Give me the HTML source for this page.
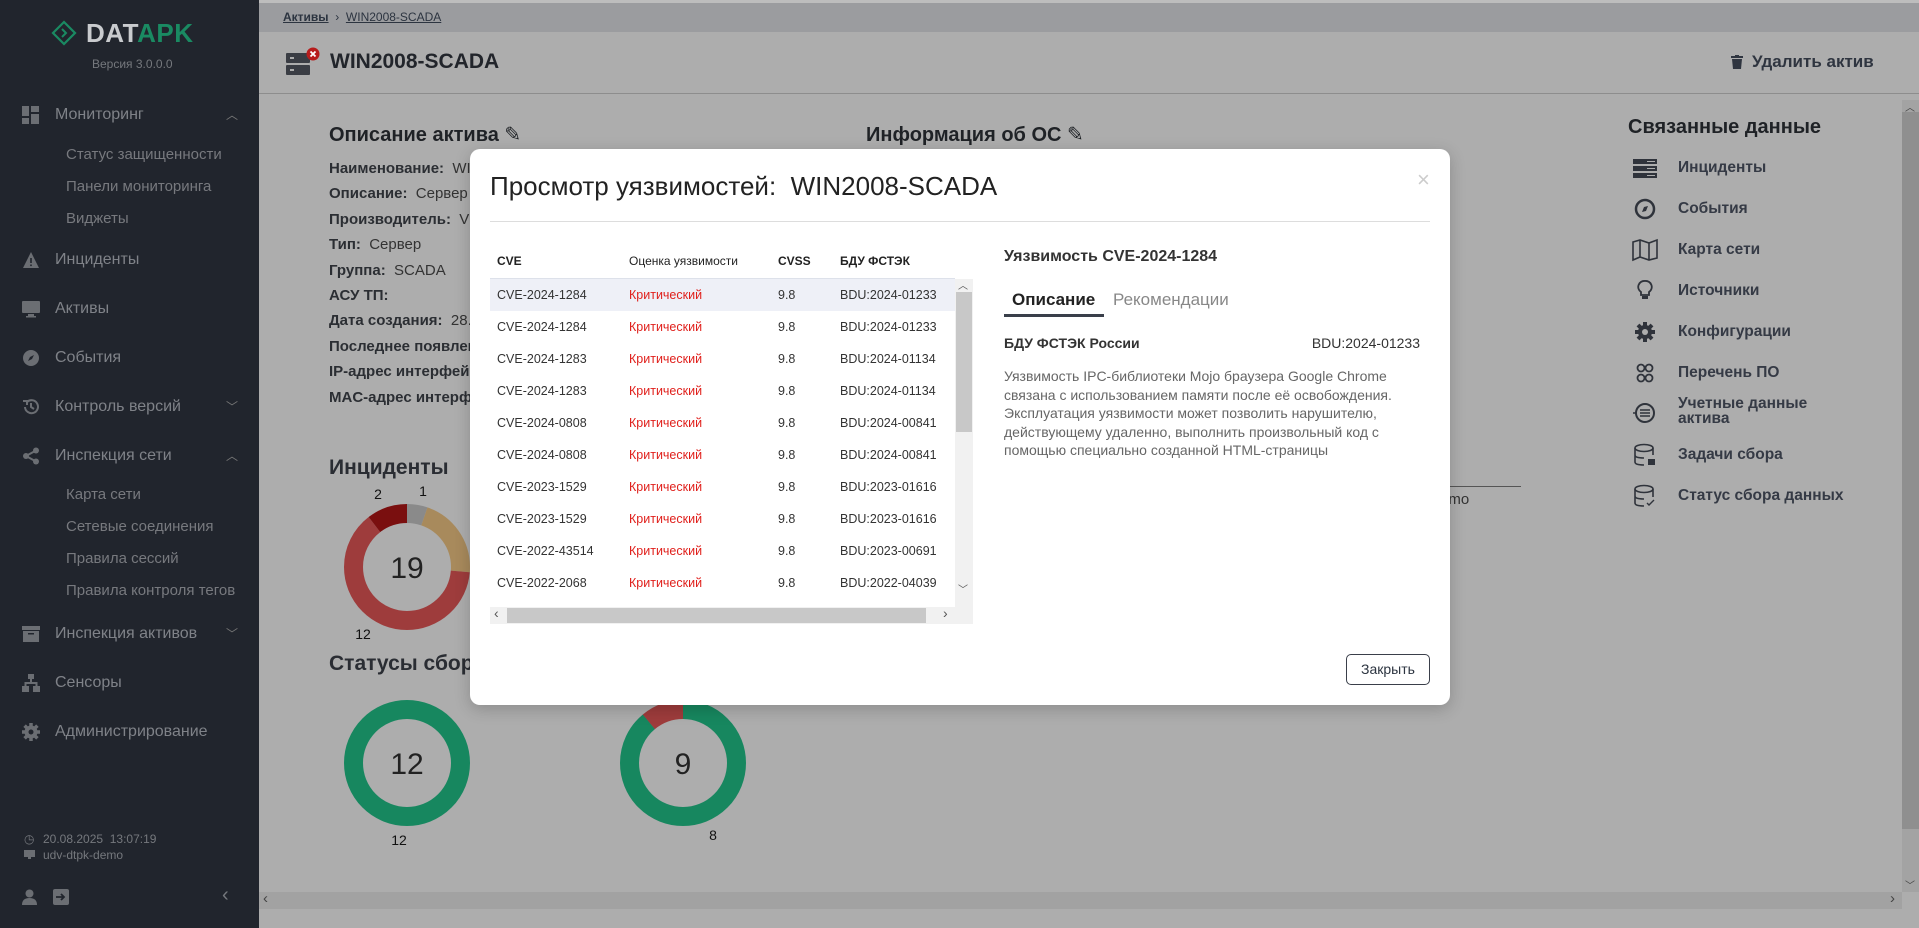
<!DOCTYPE html>
<html><head><meta charset="utf-8">
<style>
*{margin:0;padding:0;box-sizing:border-box}
body{width:1919px;height:928px;overflow:hidden;background:#adadad;font-family:"Liberation Sans","DejaVu Sans",sans-serif;position:relative;color:#2a2d33}
.a{position:absolute;white-space:nowrap}
#sb{position:absolute;left:0;top:0;width:259px;height:928px;background:#21252d}
.mi{position:absolute;left:55px;font-size:16px;color:#7f8288}
.si{position:absolute;left:66px;font-size:15px;color:#77797e}
.ic{position:absolute;left:22px;width:18px;height:18px}
.chev{position:absolute;left:226px;font-size:12px;color:#777}
.lbl{font-weight:bold;color:#2b2e33}
.row{position:absolute;left:329px;font-size:15px;color:#333}
.rd{position:absolute;left:1678px;font-size:15.5px;font-weight:bold;color:#353a45}
.rdi{position:absolute;left:1632px;width:26px;height:24px}
#modal{position:absolute;left:470px;top:149px;width:980px;height:556px;background:#fff;border-radius:10px;box-shadow:0 4px 16px rgba(0,0,0,.2);overflow:hidden}
.tr{position:absolute;left:20px;width:465px;height:32px;font-size:12.5px;color:#333}
.tr span{position:absolute;top:9px}
.c1{left:7px}.c2{left:139px;color:#e0201c}.c3{left:288px}.c4{left:350px}
</style></head><body>

<div id="sb">
  <svg class="a" style="left:51px;top:20px" width="26" height="26" viewBox="0 0 26 26"><path d="M13 2 L24 13 L13 24 L2 13 Z" fill="none" stroke="#1a8a62" stroke-width="2.2"/><path d="M11 9 L15 13 L11 17" fill="none" stroke="#1a8a62" stroke-width="2"/></svg>
  <div class="a" style="left:86px;top:18px;font-size:26px;font-weight:bold;letter-spacing:.5px;color:#c9cbce">DAT<span style="color:#1a8a62">APK</span></div>
  <div class="a" style="left:92px;top:57px;font-size:12px;color:#75787d">Версия 3.0.0.0</div>

  <svg class="ic" style="top:106px" viewBox="0 0 18 18"><rect x="0" y="0" width="7" height="10" fill="#6b6e73"/><rect x="9" y="0" width="8" height="6" fill="#6b6e73"/><rect x="9" y="8" width="8" height="10" fill="#6b6e73"/><rect x="0" y="12" width="7" height="6" fill="#6b6e73"/></svg>
  <div class="mi" style="top:106px">Мониторинг</div><div class="chev" style="top:106px">︿</div>
  <div class="si" style="top:146px">Статус защищенности</div>
  <div class="si" style="top:178px">Панели мониторинга</div>
  <div class="si" style="top:210px">Виджеты</div>
  <svg class="ic" style="top:251px" viewBox="0 0 18 18"><path d="M9 1 L17 17 L1 17 Z" fill="#6b6e73"/><rect x="8.2" y="7" width="1.6" height="5" fill="#21252d"/><rect x="8.2" y="13.5" width="1.6" height="1.6" fill="#21252d"/></svg>
  <div class="mi" style="top:251px">Инциденты</div>
  <svg class="ic" style="top:300px" viewBox="0 0 18 18"><rect x="0" y="1" width="18" height="12" rx="1" fill="#6b6e73"/><rect x="6" y="14" width="6" height="2" fill="#6b6e73"/><rect x="4" y="16" width="10" height="1.5" fill="#6b6e73"/></svg>
  <div class="mi" style="top:300px">Активы</div>
  <svg class="ic" style="top:349px" viewBox="0 0 18 18"><circle cx="9" cy="9" r="8" fill="#6b6e73"/><path d="M12 6 L10 10 L6 12 L8 8 Z" fill="#21252d"/></svg>
  <div class="mi" style="top:349px">События</div>
  <svg class="ic" style="top:398px" viewBox="0 0 18 18"><path d="M3 9 A6.5 6.5 0 1 0 5 4" fill="none" stroke="#6b6e73" stroke-width="2"/><path d="M1 3 L5 3 L5 7" fill="none" stroke="#6b6e73" stroke-width="2"/><path d="M9 5 L9 9 L12 11" fill="none" stroke="#6b6e73" stroke-width="2"/></svg>
  <div class="mi" style="top:398px">Контроль версий</div><div class="chev" style="top:398px">﹀</div>
  <svg class="ic" style="top:447px" viewBox="0 0 18 18"><circle cx="4" cy="9" r="3" fill="#6b6e73"/><circle cx="14" cy="3.5" r="3" fill="#6b6e73"/><circle cx="14" cy="14.5" r="3" fill="#6b6e73"/><path d="M4 9 L14 3.5 M4 9 L14 14.5" stroke="#6b6e73" stroke-width="2"/></svg>
  <div class="mi" style="top:447px">Инспекция сети</div><div class="chev" style="top:447px">︿</div>
  <div class="si" style="top:486px">Карта сети</div>
  <div class="si" style="top:518px">Сетевые соединения</div>
  <div class="si" style="top:550px">Правила сессий</div>
  <div class="si" style="top:582px">Правила контроля тегов</div>
  <svg class="ic" style="top:625px" viewBox="0 0 18 18"><rect x="0" y="1" width="18" height="4" fill="#6b6e73"/><rect x="1" y="6" width="16" height="11" fill="#6b6e73"/><rect x="6" y="8" width="6" height="1.5" fill="#21252d"/></svg>
  <div class="mi" style="top:625px">Инспекция активов</div><div class="chev" style="top:625px">﹀</div>
  <svg class="ic" style="top:674px" viewBox="0 0 18 18"><rect x="6" y="0" width="6" height="5" fill="#6b6e73"/><rect x="0" y="12" width="7" height="6" fill="#6b6e73"/><rect x="11" y="12" width="7" height="6" fill="#6b6e73"/><path d="M9 5 V9 M3.5 12 V9 H14.5 V12" fill="none" stroke="#6b6e73" stroke-width="2"/></svg>
  <div class="mi" style="top:674px">Сенсоры</div>
  <svg class="ic" style="top:723px" viewBox="0 0 18 18"><circle cx="9" cy="9" r="6.5" fill="#6b6e73"/><path d="M9 0 V18 M0 9 H18 M2.6 2.6 L15.4 15.4 M15.4 2.6 L2.6 15.4" stroke="#6b6e73" stroke-width="3.5"/><circle cx="9" cy="9" r="2.5" fill="#21252d"/></svg>
  <div class="mi" style="top:723px">Администрирование</div>

  <div class="a" style="left:24px;top:832px;font-size:12px;color:#75787d">◷</div>
  <div class="a" style="left:43px;top:832px;font-size:12px;color:#75787d">20.08.2025 &nbsp;13:07:19</div>
  <svg class="a" style="left:24px;top:850px" width="11" height="10" viewBox="0 0 11 10"><rect x="0" y="0" width="11" height="7" fill="#6b6e73"/><rect x="4" y="7" width="3" height="2" fill="#6b6e73"/></svg>
  <div class="a" style="left:43px;top:848px;font-size:12px;color:#75787d">udv-dtpk-demo</div>
  <svg class="a" style="left:22px;top:889px" width="15" height="16" viewBox="0 0 15 16"><circle cx="7.5" cy="4.5" r="4" fill="#6b6e73"/><path d="M0 16 Q0 9 7.5 9 Q15 9 15 16 Z" fill="#6b6e73"/></svg>
  <svg class="a" style="left:53px;top:889px" width="16" height="16" viewBox="0 0 16 16"><rect x="0" y="0" width="16" height="16" rx="2" fill="#6b6e73"/><path d="M3 8 H11 M8 5 L11 8 L8 11" fill="none" stroke="#21252d" stroke-width="1.8"/></svg>
  <div class="a" style="left:222px;top:884px;font-size:20px;color:#75787d">‹</div>
</div>

<!-- top bars -->
<div class="a" style="left:259px;top:0;width:1660px;height:3px;background:#bdbdbd"></div>
<div class="a" style="left:259px;top:3px;width:1660px;height:29px;background:#9b9c9f"></div>
<div class="a" style="left:283px;top:10px;font-size:12px;color:#2c3440"><b style="text-decoration:underline">Активы</b> &nbsp;›&nbsp; <span style="text-decoration:underline">WIN2008-SCADA</span></div>
<div class="a" style="left:259px;top:93px;width:1660px;height:1px;background:#8d8d8d"></div>
<svg class="a" style="left:286px;top:47px" width="36" height="30" viewBox="0 0 36 30"><rect x="0" y="6" width="24" height="10" rx="1" fill="#3a3d44"/><rect x="0" y="18" width="24" height="10" rx="1" fill="#3a3d44"/><rect x="4" y="10" width="4" height="2" fill="#adadad"/><rect x="4" y="22" width="4" height="2" fill="#adadad"/><circle cx="27" cy="7" r="6.5" fill="#b71c1c"/><path d="M24.5 4.5 L29.5 9.5 M29.5 4.5 L24.5 9.5" stroke="#fff" stroke-width="1.8"/></svg>
<div class="a" style="left:330px;top:50px;font-size:21px;font-weight:bold;color:#22252b">WIN2008-SCADA</div>
<svg class="a" style="left:1731px;top:55px" width="12" height="14" viewBox="0 0 12 14"><rect x="0" y="1" width="12" height="2" fill="#2f3540"/><rect x="4" y="0" width="4" height="2" fill="#2f3540"/><path d="M1 4 H11 L10 14 H2 Z" fill="#2f3540"/></svg>
<div class="a" style="left:1752px;top:52px;font-size:17px;font-weight:bold;color:#2f3540">Удалить актив</div>

<!-- left column -->
<div class="a" style="left:329px;top:122px;font-size:20px;font-weight:bold;color:#1f2226">Описание актива ✎</div>
<div class="row" style="top:160px"><span class="lbl">Наименование:</span>&nbsp; WI</div>
<div class="row" style="top:185px"><span class="lbl">Описание:</span>&nbsp; Сервер S</div>
<div class="row" style="top:211px"><span class="lbl">Производитель:</span>&nbsp; VM</div>
<div class="row" style="top:236px"><span class="lbl">Тип:</span>&nbsp; Сервер</div>
<div class="row" style="top:262px"><span class="lbl">Группа:</span>&nbsp; SCADA</div>
<div class="row" style="top:287px"><span class="lbl">АСУ ТП:</span></div>
<div class="row" style="top:312px"><span class="lbl">Дата создания:</span>&nbsp; 28.0</div>
<div class="row" style="top:338px"><span class="lbl">Последнее появлен</span></div>
<div class="row" style="top:363px"><span class="lbl">IP-адрес интерфейс</span></div>
<div class="row" style="top:389px"><span class="lbl">MAC-адрес интерфе</span></div>
<div class="a" style="left:866px;top:122px;font-size:20px;font-weight:bold;color:#1f2226">Информация об ОС ✎</div>
<div class="a" style="left:329px;top:456px;font-size:21px;font-weight:bold;color:#2a2d33">Инциденты</div>
<div class="a" style="left:329px;top:652px;font-size:21px;font-weight:bold;color:#2a2d33">Статусы сбора</div>
<div class="a" style="left:1408px;top:486px;width:113px;height:1px;background:#555"></div>
<div class="a" style="left:1440px;top:491px;font-size:15px;color:#333">emo</div>

<svg class="a" style="left:300px;top:440px" width="500" height="420" viewBox="300 440 500 420">
  <g transform="rotate(-90 407 567)" fill="none" stroke-width="19">
    <circle cx="407" cy="567" r="53.5" stroke="#8a8a8a" stroke-dasharray="17.7 400" stroke-dashoffset="0"/>
    <circle cx="407" cy="567" r="53.5" stroke="#a88a5c" stroke-dasharray="70.8 400" stroke-dashoffset="-17.7"/>
    <circle cx="407" cy="567" r="53.5" stroke="#9e3c3c" stroke-dasharray="212.3 400" stroke-dashoffset="-88.5"/>
    <circle cx="407" cy="567" r="53.5" stroke="#7a0f0f" stroke-dasharray="35.4 400" stroke-dashoffset="-300.8"/>
  </g>
  <circle cx="407" cy="763" r="53.5" fill="none" stroke="#17875f" stroke-width="19"/>
  <g transform="rotate(-90 683 763)" fill="none" stroke-width="19">
    <circle cx="683" cy="763" r="53.5" stroke="#17875f" stroke-dasharray="299 400"/>
    <circle cx="683" cy="763" r="53.5" stroke="#9e3c3c" stroke-dasharray="37.4 400" stroke-dashoffset="-298.8"/>
  </g>
  <text x="407" y="578" font-size="30" text-anchor="middle" fill="#222" font-family="Liberation Sans">19</text>
  <text x="407" y="774" font-size="30" text-anchor="middle" fill="#222" font-family="Liberation Sans">12</text>
  <text x="683" y="774" font-size="30" text-anchor="middle" fill="#222" font-family="Liberation Sans">9</text>
  <text x="378" y="499" font-size="14" text-anchor="middle" fill="#111" font-family="Liberation Sans">2</text>
  <text x="423" y="496" font-size="14" text-anchor="middle" fill="#111" font-family="Liberation Sans">1</text>
  <text x="363" y="639" font-size="14" text-anchor="middle" fill="#111" font-family="Liberation Sans">12</text>
  <text x="399" y="845" font-size="14" text-anchor="middle" fill="#111" font-family="Liberation Sans">12</text>
  <text x="713" y="840" font-size="14" text-anchor="middle" fill="#111" font-family="Liberation Sans">8</text>
</svg>

<!-- right column -->
<div class="a" style="left:1628px;top:116px;font-size:20px;font-weight:bold;color:#1f2226">Связанные данные</div>
<svg class="rdi" style="top:156px" viewBox="0 0 26 24"><rect x="1" y="3" width="24" height="5" fill="#2f333b"/><rect x="1" y="10" width="24" height="5" fill="#2f333b"/><rect x="1" y="17" width="24" height="5" fill="#2f333b"/><rect x="15" y="5" width="8" height="1" fill="#adadad"/><rect x="15" y="12" width="8" height="1" fill="#adadad"/><rect x="15" y="19" width="8" height="1" fill="#adadad"/></svg>
<div class="rd" style="top:159px">Инциденты</div>
<svg class="rdi" style="top:197px" viewBox="0 0 26 24"><circle cx="13" cy="12" r="9" fill="none" stroke="#2f333b" stroke-width="2.5"/><path d="M16 9 L14 14 L10 15 L12 10 Z" fill="#2f333b"/></svg>
<div class="rd" style="top:200px">События</div>
<svg class="rdi" style="top:238px" viewBox="0 0 26 24"><path d="M1 4 L8 2 L17 5 L25 2 V20 L17 22 L8 19 L1 22 Z M8 2 V19 M17 5 V22" fill="none" stroke="#2f333b" stroke-width="1.6"/></svg>
<div class="rd" style="top:241px">Карта сети</div>
<svg class="rdi" style="top:279px" viewBox="0 0 26 24"><path d="M13 2 A6 6 0 0 0 9 13 V16 H17 V13 A6 6 0 0 0 13 2 Z" fill="none" stroke="#2f333b" stroke-width="1.8"/><rect x="10" y="17" width="6" height="3" fill="#2f333b"/></svg>
<div class="rd" style="top:282px">Источники</div>
<svg class="rdi" style="top:320px" viewBox="0 0 26 24"><circle cx="13" cy="12" r="7" fill="#2f333b"/><path d="M13 2 V22 M3 12 H23 M6 5 L20 19 M20 5 L6 19" stroke="#2f333b" stroke-width="4"/><circle cx="13" cy="12" r="3" fill="#adadad"/></svg>
<div class="rd" style="top:323px">Конфигурации</div>
<svg class="rdi" style="top:361px" viewBox="0 0 26 24"><circle cx="9" cy="7" r="3.5" fill="none" stroke="#2f333b" stroke-width="1.8"/><circle cx="17" cy="7" r="3.5" fill="none" stroke="#2f333b" stroke-width="1.8"/><circle cx="9" cy="17" r="3.5" fill="none" stroke="#2f333b" stroke-width="1.8"/><circle cx="17" cy="17" r="3.5" fill="none" stroke="#2f333b" stroke-width="1.8"/></svg>
<div class="rd" style="top:364px">Перечень ПО</div>
<svg class="rdi" style="top:401px" viewBox="0 0 26 24"><circle cx="13" cy="12" r="9" fill="none" stroke="#2f333b" stroke-width="2"/><path d="M8 9 H18 M8 12 H18 M8 15 H18 M1 12 H4" stroke="#2f333b" stroke-width="1.6"/></svg>
<div class="rd" style="top:396px;line-height:15px">Учетные данные<br>актива</div>
<svg class="rdi" style="top:443px" viewBox="0 0 26 24"><ellipse cx="12" cy="5" rx="9" ry="3.5" fill="none" stroke="#2f333b" stroke-width="1.6"/><path d="M3 5 V19 Q3 22 12 22 M21 5 V12 M3 12 Q3 15 12 15" fill="none" stroke="#2f333b" stroke-width="1.6"/><rect x="16" y="16" width="7" height="6" fill="#2f333b"/></svg>
<div class="rd" style="top:446px">Задачи сбора</div>
<svg class="rdi" style="top:484px" viewBox="0 0 26 24"><ellipse cx="12" cy="5" rx="9" ry="3.5" fill="none" stroke="#2f333b" stroke-width="1.6"/><path d="M3 5 V19 Q3 22 12 22 M21 5 V13 M3 12 Q3 15 12 15" fill="none" stroke="#2f333b" stroke-width="1.6"/><path d="M15 19 L17 21 L22 16" fill="none" stroke="#2f333b" stroke-width="1.4"/></svg>
<div class="rd" style="top:487px">Статус сбора данных</div>

<!-- page scrollbars -->
<div class="a" style="left:1902px;top:100px;width:17px;height:792px;background:#a3a3a3"></div>
<div class="a" style="left:1902px;top:112px;width:17px;height:717px;background:#8f8f8f"></div>
<div class="a" style="left:1905px;top:99px;font-size:10px;color:#444">︿</div>
<div class="a" style="left:1905px;top:877px;font-size:10px;color:#444">﹀</div>
<div class="a" style="left:259px;top:892px;width:1643px;height:17px;background:#a2a2a2"></div>
<div class="a" style="left:263px;top:890px;font-size:15px;color:#444">‹</div>
<div class="a" style="left:1890px;top:890px;font-size:15px;color:#444">›</div>

<!-- modal -->
<div id="modal">
  <div class="a" style="left:20px;top:22px;font-size:26px;color:#222">Просмотр уязвимостей:&nbsp; WIN2008-SCADA</div>
  <div class="a" style="left:947px;top:18px;font-size:22px;color:#ccc">×</div>
  <div class="a" style="left:20px;top:72px;width:940px;height:1px;background:#ddd"></div>

  <div class="a" style="left:27px;top:105px;font-size:12px;font-weight:bold;color:#222">CVE</div>
  <div class="a" style="left:159px;top:105px;font-size:12px;color:#222">Оценка уязвимости</div>
  <div class="a" style="left:308px;top:105px;font-size:12px;font-weight:bold;color:#222">CVSS</div>
  <div class="a" style="left:370px;top:105px;font-size:12px;font-weight:bold;color:#222">БДУ ФСТЭК</div>
  <div class="a" style="left:20px;top:129px;width:465px;height:1px;background:#dde1ea"></div>

  <div class="tr" style="top:130px;background:#eef0f7"><span class="c1">CVE-2024-1284</span><span class="c2">Критический</span><span class="c3">9.8</span><span class="c4">BDU:2024-01233</span></div>
  <div class="tr" style="top:162px"><span class="c1">CVE-2024-1284</span><span class="c2">Критический</span><span class="c3">9.8</span><span class="c4">BDU:2024-01233</span></div>
  <div class="tr" style="top:194px"><span class="c1">CVE-2024-1283</span><span class="c2">Критический</span><span class="c3">9.8</span><span class="c4">BDU:2024-01134</span></div>
  <div class="tr" style="top:226px"><span class="c1">CVE-2024-1283</span><span class="c2">Критический</span><span class="c3">9.8</span><span class="c4">BDU:2024-01134</span></div>
  <div class="tr" style="top:258px"><span class="c1">CVE-2024-0808</span><span class="c2">Критический</span><span class="c3">9.8</span><span class="c4">BDU:2024-00841</span></div>
  <div class="tr" style="top:290px"><span class="c1">CVE-2024-0808</span><span class="c2">Критический</span><span class="c3">9.8</span><span class="c4">BDU:2024-00841</span></div>
  <div class="tr" style="top:322px"><span class="c1">CVE-2023-1529</span><span class="c2">Критический</span><span class="c3">9.8</span><span class="c4">BDU:2023-01616</span></div>
  <div class="tr" style="top:354px"><span class="c1">CVE-2023-1529</span><span class="c2">Критический</span><span class="c3">9.8</span><span class="c4">BDU:2023-01616</span></div>
  <div class="tr" style="top:386px"><span class="c1">CVE-2022-43514</span><span class="c2">Критический</span><span class="c3">9.8</span><span class="c4">BDU:2023-00691</span></div>
  <div class="tr" style="top:418px"><span class="c1">CVE-2022-2068</span><span class="c2">Критический</span><span class="c3">9.8</span><span class="c4">BDU:2022-04039</span></div>

  <div class="a" style="left:485px;top:130px;width:18px;height:345px;background:#f1f1f1"></div>
  <div class="a" style="left:486px;top:143px;width:16px;height:140px;background:#c8c8c8"></div>
  <div class="a" style="left:488px;top:128px;font-size:10px;color:#555">︿</div>
  <div class="a" style="left:488px;top:432px;font-size:10px;color:#555">﹀</div>
  <div class="a" style="left:20px;top:458px;width:465px;height:17px;background:#f1f1f1"></div>
  <div class="a" style="left:37px;top:459px;width:419px;height:15px;background:#c8c8c8"></div>
  <div class="a" style="left:24px;top:456px;font-size:14px;color:#555">‹</div>
  <div class="a" style="left:473px;top:456px;font-size:14px;color:#555">›</div>

  <div class="a" style="left:534px;top:99px;font-size:16px;font-weight:bold;color:#333">Уязвимость CVE-2024-1284</div>
  <div class="a" style="left:542px;top:141px;font-size:17px;font-weight:bold;color:#222">Описание</div>
  <div class="a" style="left:643px;top:141px;font-size:17px;color:#888">Рекомендации</div>
  <div class="a" style="left:534px;top:165px;width:100px;height:3px;background:#3a3f4a"></div>
  <div class="a" style="left:534px;top:186px;font-size:14px;font-weight:bold;color:#333">БДУ ФСТЭК России</div>
  <div class="a" style="left:840px;top:186px;width:110px;text-align:right;font-size:14px;color:#333">BDU:2024-01233</div>
  <div class="a" style="left:534px;top:218px;width:420px;white-space:normal;font-size:14px;line-height:18.6px;color:#666">Уязвимость IPC-библиотеки Mojo браузера Google Chrome связана с использованием памяти после её освобождения. Эксплуатация уязвимости может позволить нарушителю, действующему удаленно, выполнить произвольный код с помощью специально созданной HTML-страницы</div>

  <div class="a" style="left:876px;top:505px;width:84px;height:31px;border:1px solid #3a3f4a;border-radius:5px;font-size:14px;color:#2c3440;text-align:center;line-height:29px">Закрыть</div>
</div>
</body></html>
